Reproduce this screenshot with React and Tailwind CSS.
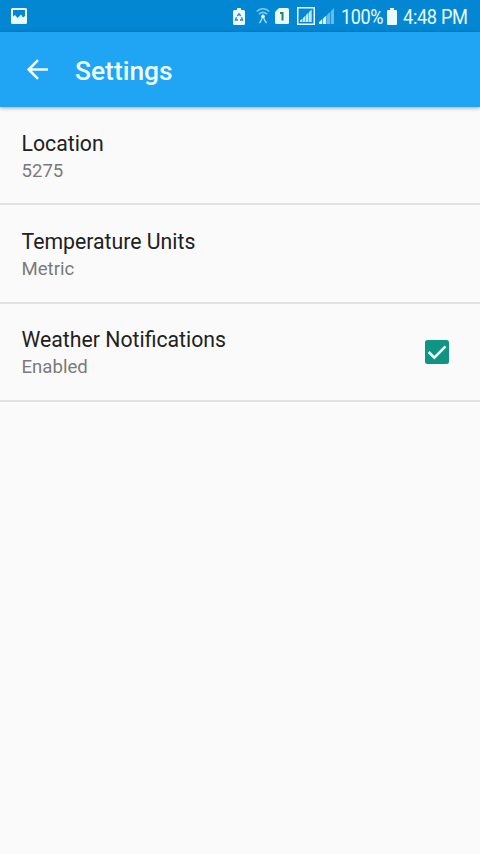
import React, { useState } from "react";

const initialSettings = [
  { id: "location", title: "Location", summary: "5275" },
  { id: "units", title: "Temperature Units", summary: "Metric" },
  { id: "notifications", title: "Weather Notifications", summary: "Enabled", checkable: true },
];

function StatusBar() {
  return (
    <div className="flex h-8 items-center bg-[#0487d2] pl-[11px] pr-3 text-[#e9fbff]">
      {/* Gallery */}
      <svg className="h-4 w-4" viewBox="0 0 16 16" fill="currentColor">
        <path fillRule="evenodd" d="M1.5 0h13Q16 0 16 1.500v13q0 1.500-1.500 1.500h-13Q0 16 0 14.500v-13Q0 0 1.500 0zM2 2v6.500l2-1.500 2.500 3 3.500-3.500 2 3L14 8V2z" />
      </svg>

      <div className="ml-auto flex items-center">
        {/* Battery saver */}
        <svg className="h-[17px] w-3" viewBox="0 0 12 17">
          <path fill="currentColor" d="M4 0h4v2h2.500Q12 2 12 3.500v12q0 1.500-1.500 1.500h-9Q0 17 0 15.500v-12Q0 2 1.500 2H4z" />
          <path fill="none" stroke="#3f87a8" strokeWidth="1.400" d="M4.300 8 6 5.800 7.700 8M8.500 9.300 9.500 12H7M5 12H2.500l1-2.700" />
        </svg>

        {/* Wifi */}
        <svg className="ml-[11px] h-4 w-[14px]" viewBox="0 0 14 16" fill="none" stroke="#7cc9ec" strokeWidth="1.500">
          <path d="M.7 3.500Q7-2 13.300 3.500M2.700 6.300Q7 2.500 11.300 6.300" />
          <path stroke="#a5e2f7" d="M6.500 8.500Q6 12 3.500 15M7.500 8.500Q8 12 10.500 15" />
          <circle cx="7" cy="8.300" r="1.700" fill="#e9fbff" stroke="none" />
        </svg>

        {/* SIM 1 */}
        <svg className="ml-[5px] h-4 w-[14px]" viewBox="0 0 14 16">
          <path fill="currentColor" d="M4 0h8.500Q14 0 14 1.500v13q0 1.500-1.500 1.500h-11Q0 16 0 14.500V4z" />
          <path fill="none" stroke="#2f8060" strokeWidth="2" d="M5 5h2.500V12.500" />
        </svg>

        {/* Mobile signal */}
        <svg className="ml-2 h-[18px] w-[18px]" viewBox="0 0 18 18">
          <path fill="none" stroke="currentColor" strokeWidth="1.500" d="M.75.75h16.500v16.500H.75z" />
          <path fill="#bdebfa" d="M3 13.500l2.500-2V15H3zM6 11l2.500-2.500V15H6zM9 8l2.500-2.500V15H9zM12 5l2.700-2.500V15H12z" />
        </svg>
        <svg className="ml-1 h-4 w-[15px]" viewBox="0 0 15 16">
          <path fill="#d5f4fd" d="M0 14l3.300-3v5H0zM4 10.500l3.300-3V16H4z" />
          <path fill="#63b9e8" d="M8 7l3.300-3.500V16H8zM12 3l3-3v16h-3z" />
        </svg>

        <span className="ml-[7px] mt-0.5 w-[42px] origin-left scale-x-[0.880] whitespace-nowrap text-[20.500px] leading-8 tracking-[-0.400px]">100%</span>
        <svg className="ml-[4px] h-[17px] w-[10px]" viewBox="0 0 10 17" fill="currentColor">
          <path d="M3 0h4v2h2q1 0 1 1v13q0 1-1 1H1q-1 0-1-1V3q0-1 1-1h2z" />
        </svg>
        <span className="ml-1.5 mt-0.5 w-[65px] origin-left scale-x-[0.890] whitespace-nowrap text-[20.500px] leading-8 tracking-[-0.400px]">4:48 PM</span>
      </div>
    </div>
  );
}

function Toolbar() {
  return (
    <header className="relative flex h-[75px] items-center bg-[#1fa5f4] pl-[27px] text-[#eefcff] shadow-[0_1px_4px_rgba(0,0,0,0.350)]">
      <button aria-label="Back">
        <svg className="h-[21px] w-[21px]" viewBox="0 0 21 21" fill="none" stroke="currentColor" strokeWidth="2.600">
          <path d="M21 10.500H2M11 1.200 1.700 10.500l9.300 9.300" />
        </svg>
      </button>
      <h1 className="ml-[27px] mt-0.5 text-[26.400px] font-medium leading-8">Settings</h1>
    </header>
  );
}

function Checkbox({ checked }) {
  return (
    <svg className="h-6 w-6" viewBox="0 0 24 24">
      <rect width="24" height="24" rx="2.500" fill={checked ? "#109484" : "#757575"} />
      {checked ? (
        <path fill="none" stroke="#e6fffb" strokeWidth="2.600" d="m3.700 12 5.600 5.600L20.500 6.400" />
      ) : (
        <rect x="2.500" y="2.500" width="19" height="19" fill="#fafafa" />
      )}
    </svg>
  );
}

export default function App() {
  const [enabled, setEnabled] = useState(true);

  return (
    <div className="min-h-screen bg-[#fafafa] font-['Roboto',sans-serif]">
      <StatusBar />
      <Toolbar />
      <ul>
        {initialSettings.map((item) => (
          <li
            key={item.id}
            className="flex h-[98.300px] items-center border-b-2 border-[#e2e2e2] pl-[21.500px] pr-[31px]"
            onClick={item.checkable ? () => setEnabled(!enabled) : undefined}
          >
            <div className="flex-1 pt-[3px]">
              <p className="text-[21.250px] leading-7 text-[#212121]">{item.title}</p>
              <p className="text-[18.600px] leading-[26px] text-[#7a7a7a]">
                {item.checkable && !enabled ? "Disabled" : item.summary}
              </p>
            </div>
            {item.checkable && <Checkbox checked={enabled} />}
          </li>
        ))}
      </ul>
    </div>
  );
}
